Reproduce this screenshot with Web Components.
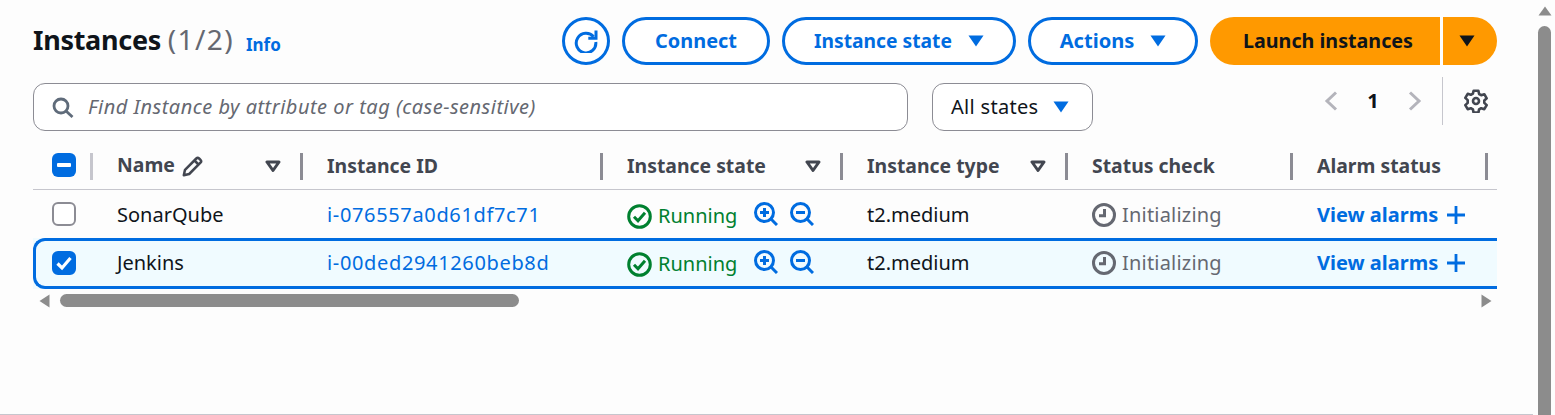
<!DOCTYPE html>
<html>
<head>
<meta charset="utf-8">
<title>Instances</title>
<style>
  html, body { margin: 0; height: 100%; overflow: hidden; background: #fdfdfd; }
  body { font-family: "Noto Sans", sans-serif; color: #0f141a; }
</style>
</head>
<body>
<ec2-page>
  <ec2-toolbar></ec2-toolbar>
  <ec2-filter></ec2-filter>
  <ec2-table></ec2-table>
</ec2-page>

<script>
const BLUE = "#006ce0";

const ICONS = {
  refresh: `<svg width="24" height="24" viewBox="0 0 24 24" fill="none" stroke="${BLUE}" stroke-width="3"><path d="M19.600 7.800A9.800 9.800 0 1 0 21.800 13"/><path d="M22 1.500v7.700h-7.700"/></svg>`,
  search: `<svg width="22" height="21" viewBox="0 0 22 21" fill="none" stroke="#5f6b7a" stroke-width="2.800"><circle cx="9" cy="9" r="7"/><path d="M14 14l6.500 6"/></svg>`,
  left: `<svg width="14" height="20" viewBox="0 0 14 20" fill="none" stroke="#b4b4bb" stroke-width="3"><path d="M12 1.500L3 10l9 8.500"/></svg>`,
  right: `<svg width="14" height="20" viewBox="0 0 14 20" fill="none" stroke="#b4b4bb" stroke-width="3"><path d="M2 1.500L11 10l-9 8.500"/></svg>`,
  gear: `<svg width="24" height="24" viewBox="0 0 24 24" fill="none" stroke="#424650" stroke-width="2.600" stroke-linejoin="round"><circle cx="12" cy="12" r="3"/><path d="M9.600 1.800h4.800l.7 3.200 2.100 1.200 3.100-1 2.400 4.100-2.400 2.200v2.400l2.400 2.200-2.400 4.100-3.100-1-2.100 1.200-.7 3.200H9.600l-.7-3.200-2.100-1.200-3.100 1-2.400-4.100 2.400-2.200V11.100L1.300 8.900l2.400-4.100 3.100 1 2.100-1.200z"/></svg>`,
  pencil: `<svg width="21" height="21" viewBox="0 0 21 21" fill="none" stroke="#424650" stroke-width="2.500" stroke-linejoin="round"><path d="M1.800 19.200l1.200-5.400L14.300 2.500a2 2 0 0 1 2.800 0l1.400 1.400a2 2 0 0 1 0 2.800L7.200 18z"/><path d="M12.500 4.500l4 4"/></svg>`,
  running: `<svg width="25" height="25" viewBox="0 0 25 25" fill="none" stroke="#00802f" stroke-width="3"><circle cx="12.500" cy="12.500" r="10.800"/><path d="M7 12.800l4 4 7-8"/></svg>`,
  clock: `<svg width="24" height="24" viewBox="0 0 24 24" fill="none" stroke="#656871" stroke-width="3"><circle cx="12" cy="12" r="10.500"/><path d="M12.500 6v6.800H7"/></svg>`,
  zoomIn: `<svg width="24" height="24" viewBox="0 0 24 24" fill="none" stroke="${BLUE}" stroke-width="3"><circle cx="10.500" cy="10.500" r="9"/><path d="M17 17l6 6"/><path d="M6 10.500h9M10.500 6v9"/></svg>`,
  zoomOut: `<svg width="24" height="24" viewBox="0 0 24 24" fill="none" stroke="${BLUE}" stroke-width="3"><circle cx="10.500" cy="10.500" r="9"/><path d="M17 17l6 6"/><path d="M6 10.500h9"/></svg>`,
  plus: `<svg width="18" height="18" viewBox="0 0 18 18" fill="none" stroke="${BLUE}" stroke-width="2.800"><path d="M0 9h18M9 0v18"/></svg>`,
  sortDown: `<svg width="16" height="13" viewBox="0 0 16 13" fill="none" stroke="#424650" stroke-width="3" stroke-linejoin="round"><path d="M2 2h12L8 10.500z"/></svg>`
};

function caret(color) {
  return `<svg width="16" height="12" viewBox="0 0 16 12"><path d="M0.500 0.500h15L8 11.500z" fill="${color}"/></svg>`;
}

class Ec2Page extends HTMLElement {
  constructor() {
    super();
    this.attachShadow({ mode: "open" });
    this.shadowRoot.innerHTML = `
    <style>
      :host { display: flex; height: 415px; width: 1555px; overflow: hidden; }
      main { width: 1533px; height: 415px; border-bottom: 1px solid #c6c6cd; padding: 17px 0 0 33px; flex: none; box-sizing: border-box; }
      ec2-scrollbar { margin-left: 5px; }
    </style>
    <main><slot></slot></main>
    <ec2-scrollbar></ec2-scrollbar>
    `;
  }
}

class Ec2Scrollbar extends HTMLElement {
  constructor() {
    super();
    this.attachShadow({ mode: "open" });
    this.shadowRoot.innerHTML = `
    <style>
      :host { display: flex; flex-direction: column; align-items: center; width: 13px; padding-top: 6px; box-sizing: border-box; }
      svg { display: block; margin-bottom: 10px; }
      div { width: 13px; flex: 1; background: #8c8c8c; border-radius: 7px 7px 0 0; }
    </style>
    <svg width="14" height="10" viewBox="0 0 14 10"><path d="M7 0.500l6.500 9H0.500z" fill="#8c8c8c"/></svg>
    <div></div>
    `;
  }
}

class Ec2Button extends HTMLElement {
  constructor() {
    super();
    this.attachShadow({ mode: "open" });
    this.shadowRoot.innerHTML = `
    <style>
      :host { display: inline-flex; align-items: center; justify-content: center; box-sizing: border-box; height: 48px;
        border: 3px solid ${BLUE}; border-radius: 24px; background: #fff; color: ${BLUE};
        font: 700 19.900px/24px "Noto Sans", sans-serif; white-space: nowrap; }
      span { display: inline-flex; margin-left: 16px; }
    </style>
    <slot></slot><span></span>
    `;
  }

  connectedCallback() {
    const tail = this.shadowRoot.querySelector("span");
    if (this.hasAttribute("caret")) {
      tail.innerHTML = caret(BLUE);
    } else {
      tail.remove();
    }
    if (this.hasAttribute("w")) {
      this.style.width = this.getAttribute("w") + "px";
    }
    if (this.hasAttribute("fs")) {
      this.style.fontSize = this.getAttribute("fs") + "px";
    }
  }
}

class Ec2Toolbar extends HTMLElement {
  constructor() {
    super();
    this.attachShadow({ mode: "open" });
    this.shadowRoot.innerHTML = `
    <style>
      :host { display: flex; align-items: center; width: 1464px; height: 48px; }
      h1 { margin: -4px 0 0; font: 700 27px/48px "Noto Sans", sans-serif; letter-spacing: -0.300px; color: #0f141a; }
      h1 span { font-weight: 400; font-size: 28px; color: #656871; letter-spacing: 1.400px; }
      a { margin-left: 12px; color: ${BLUE}; font: 700 17px/48px "Noto Sans", sans-serif; padding-top: 8px; }
      .gap { flex: 1; }
      .btns { display: flex; gap: 12px; }
      .launch { display: flex; height: 48px; color: #0f141a; font: 700 19.700px/48px "Noto Sans", sans-serif; }
      .launch div { background: #ff9900; display: flex; align-items: center; }
      .launch .main { width: 230px; padding-left: 33px; box-sizing: border-box; border-radius: 24px 0 0 24px; }
      .launch .drop { width: 54px; margin-left: 3px; padding-left: 16px; box-sizing: border-box; border-radius: 0 24px 24px 0; }
    </style>
    <h1>Instances <span>(1/2)</span></h1>
    <a>Info</a>
    <div class="gap"></div>
    <div class="btns">
      <ec2-button w="48">${ICONS.refresh}</ec2-button>
      <ec2-button w="148">Connect</ec2-button>
      <ec2-button w="234" fs="19.250" caret>Instance state</ec2-button>
      <ec2-button w="170" fs="20.100" caret>Actions</ec2-button>
      <div class="launch">
        <div class="main">Launch instances</div>
        <div class="drop">${caret("#0f141a")}</div>
      </div>
    </div>
    `;
  }
}

class Ec2Filter extends HTMLElement {
  constructor() {
    super();
    this.attachShadow({ mode: "open" });
    this.shadowRoot.innerHTML = `
    <style>
      :host { display: flex; width: 1464px; height: 48px; margin-top: 18px; font: 400 20px/24px "Noto Sans", sans-serif; }
      .search, .select { box-sizing: border-box; height: 48px; border: 1px solid #8c8c94; border-radius: 12px; background: #fff; display: flex; align-items: center; }
      .search { width: 875px; padding-left: 18px; gap: 14px; color: #656871; font-style: italic; letter-spacing: 0.490px; }
      .select { width: 161px; margin-left: 24px; padding-left: 18px; gap: 15px; color: #0f141a; letter-spacing: 0.300px; }
      svg { flex: none; display: block; }
      .pager { margin-left: auto; margin-right: 9px; display: flex; align-items: center; height: 48px; margin-top: -6px; }
      .num { font-weight: 700; color: #0f141a; width: 70px; text-align: center; font-size: 20px; }
      .div { width: 1px; height: 48px; background: #c6c6cd; margin: 0 21px 0 20px; }
    </style>
    <div class="search">${ICONS.search}<span>Find Instance by attribute or tag (case-sensitive)</span></div>
    <div class="select"><span>All states</span>${caret(BLUE)}</div>
    <div class="pager">${ICONS.left}<span class="num">1</span>${ICONS.right}<span class="div"></span>${ICONS.gear}</div>
    `;
  }
}

const COLS = "58px 210px 300px 240px 225px 225px 195px 11px";

class Ec2Table extends HTMLElement {
  constructor() {
    super();
    this.attachShadow({ mode: "open" });
    this.shadowRoot.innerHTML = `
    <style>
      :host { display: block; width: 1464px; margin-top: 14px; }
      .hscroll { display: flex; align-items: center; height: 13px; margin-top: 5px; padding-left: 6px; }
      .hscroll svg { display: block; }
      .thumb { width: 459px; height: 13px; background: #8c8c8c; border-radius: 7px; margin-left: 10px; }
      .hscroll .end { margin-left: auto; margin-right: 5px; }
    </style>
    <ec2-head></ec2-head>
    <ec2-row name="SonarQube" iid="i-076557a0d61df7c71"></ec2-row>
    <ec2-row selected name="Jenkins" iid="i-00ded2941260beb8d"></ec2-row>
    <div class="hscroll">
      <svg width="11" height="14" viewBox="0 0 11 14"><path d="M0.500 7L10.500 0.500v13z" fill="#8c8c8c"/></svg>
      <div class="thumb"></div>
      <svg class="end" width="11" height="14" viewBox="0 0 11 14"><path d="M10.500 7L0.500 0.500v13z" fill="#8c8c8c"/></svg>
    </div>
    `;
  }
}

class Ec2Head extends HTMLElement {
  constructor() {
    super();
    this.attachShadow({ mode: "open" });
    this.shadowRoot.innerHTML = `
    <style>
      :host { display: grid; grid-template-columns: ${COLS}; height: 45px; box-sizing: border-box; border-bottom: 1px solid #c6c6cd;
        font: 700 19.400px/24px "Noto Sans", sans-serif; color: #424650; }
      .c { display: flex; align-items: center; height: 44px; position: relative; box-sizing: border-box; padding-left: 26px; white-space: nowrap; padding-bottom: 2px; }
      .c::after { content: ""; position: absolute; right: -2px; top: 8px; height: 27px; width: 3px; background: #8c8c94; }
      .c.first { padding-left: 19px; }
      .c.first::after { background: #c6c6cd; }
      .c svg { display: block; }
      .name { margin-top: -2px; }
      .sort { margin-left: auto; margin-right: 20px; }
      .pen { margin-left: 7px; }
      .box { width: 24px; height: 24px; border-radius: 6px; background: ${BLUE}; display: flex; align-items: center; justify-content: center; margin-top: -2px; }
      .box i { display: block; width: 14px; height: 4px; background: #fff; border-radius: 1px; }
    </style>
    <div class="c first"><span class="box"><i></i></span></div>
    <div class="c"><span class="name">Name</span><span class="pen">${ICONS.pencil}</span><span class="sort">${ICONS.sortDown}</span></div>
    <div class="c"><span>Instance ID</span></div>
    <div class="c"><span>Instance state</span><span class="sort">${ICONS.sortDown}</span></div>
    <div class="c"><span>Instance type</span><span class="sort">${ICONS.sortDown}</span></div>
    <div class="c"><span>Status check</span></div>
    <div class="c"><span>Alarm status</span></div>
    `;
  }
}

class Ec2Row extends HTMLElement {
  constructor() {
    super();
    this.attachShadow({ mode: "open" });
  }

  connectedCallback() {
    const selected = this.hasAttribute("selected");
    this.shadowRoot.innerHTML = `
    <style>
      :host { display: grid; grid-template-columns: ${COLS}; height: 48px; box-sizing: border-box; align-items: center;
        font: 400 20px/24px "Noto Sans", sans-serif; color: #0f141a; position: relative; }
      :host([selected]) { height: 51px; background: #f0fbff; }
      :host([selected])::before { content: ""; position: absolute; left: 0; right: 0; top: 0; bottom: 0; border: 3px solid ${BLUE}; border-right: 0; border-radius: 12px 0 0 12px; }
      .c { box-sizing: border-box; padding-left: 26px; display: flex; align-items: center; white-space: nowrap; position: relative; margin-top: 2px; }
      .c.run { margin-top: 4px; }
      .c.first { padding-left: 19px; margin-top: 0; }
      :host([selected]) .c { margin-top: -1px; }
      :host([selected]) .c.run { margin-top: 1px; }
      .box { box-sizing: border-box; width: 24px; height: 24px; border-radius: 6px; border: 2px solid #8c8c94; background: #fff; display: block; }
      .box.on { background: ${BLUE}; border-color: ${BLUE}; display: flex; align-items: center; justify-content: center; }
      a { color: ${BLUE}; letter-spacing: 0.650px; }
      svg { display: block; flex: none; }
      .run { color: #00802f; gap: 6px; }
      .run .tail { display: flex; gap: 12px; margin-left: 11px; margin-top: -4px; }
      .wait { color: #656871; gap: 6px; letter-spacing: 0.200px; }
      .wait svg { margin-top: -1px; }
      .alarm a { font-weight: 700; letter-spacing: 0; }
      .alarm svg { margin-left: 9px; }
    </style>
    <div class="c first"><span class="box ${selected ? "on" : ""}">${selected ? `<svg width="18" height="16" viewBox="0 0 18 16" fill="none" stroke="#fff" stroke-width="3.200"><path d="M2.500 8.500l4.500 4.500L15.500 3"/></svg>` : ""}</span></div>
    <div class="c">${this.getAttribute("name")}</div>
    <div class="c"><a>${this.getAttribute("iid")}</a></div>
    <div class="c run">${ICONS.running}<span>Running</span><span class="tail">${ICONS.zoomIn}${ICONS.zoomOut}</span></div>
    <div class="c">t2.medium</div>
    <div class="c wait">${ICONS.clock}<span>Initializing</span></div>
    <div class="c alarm"><a>View alarms</a>${ICONS.plus}</div>
    `;
  }
}

customElements.define("ec2-page", Ec2Page);
customElements.define("ec2-scrollbar", Ec2Scrollbar);
customElements.define("ec2-button", Ec2Button);
customElements.define("ec2-toolbar", Ec2Toolbar);
customElements.define("ec2-filter", Ec2Filter);
customElements.define("ec2-table", Ec2Table);
customElements.define("ec2-head", Ec2Head);
customElements.define("ec2-row", Ec2Row);
</script>
</body>
</html>
